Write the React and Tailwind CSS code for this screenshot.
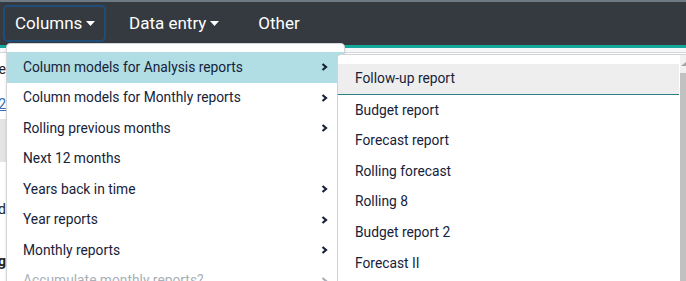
import React from "react";

const mainItems = [
  { label: "Column models for Analysis reports", sub: true, active: true },
  { label: "Column models for Monthly reports", sub: true },
  { label: "Rolling previous months", sub: true },
  { label: "Next 12 months" },
  { label: "Years back in time", sub: true },
  { label: "Year reports", sub: true },
  { label: "Monthly reports", sub: true },
  { label: "Accumulate monthly reports?", sub: true, disabled: true },
];

const subItems = [
  "Follow-up report",
  "Budget report",
  "Forecast report",
  "Rolling forecast",
  "Rolling 8",
  "Budget report 2",
  "Forecast II",
  "Forecast III",
];

const Caret = () => (
  <svg width="9" height="5" viewBox="0 0 9 5" className="ml-[4px] -mt-[1px]">
    <path d="M0 0h9L4.5 5z" fill="white" />
  </svg>
);

const Chevron = ({ muted }) => (
  <svg width="7" height="8" viewBox="0 0 7 8">
    <path d="M1.5 1l3.5 3-3.5 3" fill="none" stroke={muted ? "#a9b0b8" : "#16223a"} strokeWidth="2.2" />
  </svg>
);

export default function App() {
  return (
    <div className="relative w-[686px] h-[281px] overflow-hidden bg-white font-['Roboto',sans-serif]">
      <div className="h-[2px] bg-[#6d7a84]" />
      <nav className="h-[43px] bg-[#343a40] flex items-center pl-[3px] text-white text-[17px]">
        <button className="h-[37px] w-[103px] flex items-center pl-[10px] rounded-[5px] border-2 border-[#1f4d78]">
          Columns
          <Caret />
        </button>
        <button className="flex items-center ml-[23px]">
          Data entry
          <Caret />
        </button>
        <span className="ml-[39px]">Other</span>
      </nav>
      <div className="h-[3px] bg-[#16a89a]" />
      <div className="h-[5px] bg-[#f6f7f8] border-b border-[#d4d7da]" />

      {/* page content peeking out at the left edge */}
      <div className="w-[6px] overflow-hidden text-[14px] text-[#222]">
        <div className="flex justify-end whitespace-nowrap mt-[1px] h-[30px] items-center">e</div>
        <div className="flex justify-end whitespace-nowrap mt-[7px] h-[26px] items-center text-[#3a6fb0] underline">2</div>
        <div className="h-[43px] bg-[#e4e4e4] mt-[2px]" />
        <div className="flex justify-end whitespace-nowrap h-[30px] mt-[32px] items-center">d</div>
        <div className="flex justify-end whitespace-nowrap h-[30px] mt-[22px] items-center font-bold">g</div>
      </div>

      {/* main dropdown */}
      <div className="absolute left-[6px] top-[43px] w-[339px] bg-white border border-[#d3d6d9] rounded-[4px] pt-[8px] shadow-sm">
        {mainItems.map((it) => (
          <div
            key={it.label}
            className={`h-[30.5px] flex items-center justify-between pl-[16px] pr-[16px] text-[13.8px] ${
              it.active ? "bg-[#b0dee4]" : ""
            } ${it.disabled ? "text-[#a9b0b8]" : "text-[#16223a]"}`}
          >
            <span>{it.label}</span>
            {it.sub && <Chevron muted={it.disabled} />}
          </div>
        ))}
      </div>

      {/* submenu */}
      <div className="absolute left-[337px] top-[54px] right-0 h-[260px] flex bg-white border-l border-t border-[#cfd3d6] rounded-tl-[4px]">
        <div className="flex-1 pt-[9px] pr-[1px]">
          {subItems.map((s, i) => (
            <div
              key={s}
              className={`h-[30.6px] flex items-center pl-[17px] text-[13.8px] text-[#16223a] ${
                i === 0 ? "bg-[#eeeeee] border-b border-[#2a7f86]" : ""
              }`}
            >
              {s}
            </div>
          ))}
        </div>
        <div className="w-[6px] flex flex-col bg-[#f1f1f1]">
          <div className="h-[18px] flex items-start justify-end pt-[7px]">
            <svg width="5" height="4" viewBox="0 0 5 4">
              <path d="M0 4L5 0v4z" fill="#a3a3a3" />
            </svg>
          </div>
          <div className="flex-1 bg-[#c1c1c1]" />
        </div>
      </div>
    </div>
  );
}
